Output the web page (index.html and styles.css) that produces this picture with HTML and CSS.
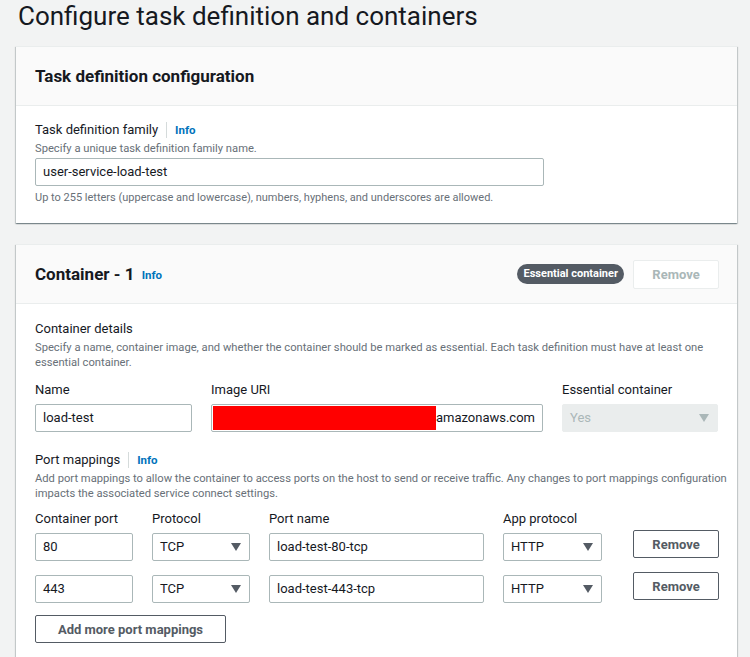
FILE: index.html
```html
<!DOCTYPE html>
<html>
<head>
<meta charset="utf-8">
<link rel="stylesheet" href="styles.css">
</head>
<body>
<h1 class="page-title">Configure task definition and containers</h1>

<section class="card card-first">
  <div class="card-header">
    <h2 class="card-title">Task definition configuration</h2>
  </div>
  <div class="card-body">
    <div class="label-row"><span class="label">Task definition family</span><span class="info-sep"></span><a class="info">Info</a></div>
    <div class="desc">Specify a unique task definition family name.</div>
    <div class="input input-family">user-service-load-test</div>
    <div class="hint">Up to 255 letters (uppercase and lowercase), numbers, hyphens, and underscores are allowed.</div>
  </div>
</section>

<section class="card card-second">
  <div class="card-header header-split">
    <h2 class="card-title">Container - 1 <a class="info info-title">Info</a></h2>
    <div class="header-actions">
      <span class="badge">Essential container</span>
      <button class="btn btn-disabled">Remove</button>
    </div>
  </div>
  <div class="card-body body-second">
    <div class="label">Container details</div>
    <div class="desc desc-wide">Specify a name, container image, and whether the container should be marked as essential. Each task definition must have at least one<br>essential container.</div>

    <div class="details-grid">
      <div class="field">
        <div class="label">Name</div>
        <div class="input">load-test</div>
      </div>
      <div class="field">
        <div class="label">Image URI</div>
        <div class="input input-uri"><span class="redact"></span><span>amazonaws.com</span></div>
      </div>
      <div class="field">
        <div class="label">Essential container</div>
        <div class="input select select-disabled"><span>Yes</span><span class="caret"></span></div>
      </div>
    </div>

    <div class="label-row label-ports"><span class="label">Port mappings</span><span class="info-sep"></span><a class="info">Info</a></div>
    <div class="desc desc-wide">Add port mappings to allow the container to access ports on the host to send or receive traffic. Any changes to port mappings configuration<br>impacts the associated service connect settings.</div>

    <div class="ports-grid">
      <div class="label col-label">Container port</div>
      <div class="label col-label">Protocol</div>
      <div class="label col-label">Port name</div>
      <div class="label col-label">App protocol</div>
      <div></div>

      <div class="input">80</div>
      <div class="input select"><span>TCP</span><span class="caret"></span></div>
      <div class="input">load-test-80-tcp</div>
      <div class="input select"><span>HTTP</span><span class="caret"></span></div>
      <button class="btn btn-remove">Remove</button>

      <div class="input">443</div>
      <div class="input select"><span>TCP</span><span class="caret"></span></div>
      <div class="input">load-test-443-tcp</div>
      <div class="input select"><span>HTTP</span><span class="caret"></span></div>
      <button class="btn btn-remove">Remove</button>
    </div>

    <button class="btn btn-add">Add more port mappings</button>
  </div>
</section>
</body>
</html>
```

FILE: styles.css
```css
* { box-sizing: border-box; }
html, body { margin: 0; padding: 0; }
body {
  background: #f2f3f3;
  font-family: Roboto, "Liberation Sans", sans-serif;
  color: #16191f;
  font-size: 13px;
  width: 750px;
  height: 657px;
  overflow: hidden;
  padding-left: 16px;
}
.page-title {
  margin: 0;
  padding: 1px 0 0 2px;
  font-size: 26px;
  font-weight: 400;
  line-height: 30px;
  height: 46px;
  color: #16191f;
}
.card {
  width: 721px;
  background: #fff;
  box-shadow: 0 1px 1px 0 rgba(0, 28, 36, 0.3), 1px 1px 1px 0 rgba(0, 28, 36, 0.15), -1px 1px 1px 0 rgba(0, 28, 36, 0.15);
  border-top: 1px solid #eaeded;
}
.card-second { margin-top: 21px; }
.card-header {
  background: #fafafa;
  border-bottom: 1px solid #eaeded;
  height: 59px;
  padding: 0 19px;
  display: flex;
  align-items: center;
}
.header-split { justify-content: space-between; padding-right: 18px; }
.card-title {
  margin: 0;
  font-size: 17px;
  font-weight: 700;
  line-height: 22px;
}
.info-title { font-size: 12px; margin-left: 3px; vertical-align: 1px; }
.header-actions { display: flex; align-items: center; gap: 9px; }
.badge {
  background: #545b64;
  color: #fff;
  font-size: 11px;
  font-weight: 700;
  height: 20px;
  line-height: 20px;
  padding: 0 6px;
  border-radius: 10px;
}
.card-body { padding: 15px 19px 0 19px; height: 117px; }
.body-second { padding-top: 16px; height: auto; padding-bottom: 20px; }
.label-row { display: flex; align-items: center; height: 18px; }
.label { font-size: 13px; line-height: 18px; color: #16191f; }
.info-sep {
  width: 1px;
  height: 16px;
  background: #d5dbdb;
  margin: 0 8px 0 8px;
}
.info {
  color: #0073bb;
  font-weight: 700;
  font-size: 11.5px;
}
.desc {
  font-size: 11.2px;
  line-height: 15px;
  color: #687078;
  margin-top: 2px;
}
.desc-wide { white-space: nowrap; }
.hint {
  font-size: 11px;
  line-height: 15px;
  color: #687078;
  margin-top: 4px;
}
.input {
  height: 28px;
  border: 1px solid #aab7b8;
  border-radius: 2px;
  background: #fff;
  font-size: 13px;
  line-height: 26px;
  padding: 0 7px;
  color: #16191f;
  white-space: nowrap;
  overflow: hidden;
}
.input-family { width: 509px; margin-top: 2px; }
.details-grid {
  display: grid;
  grid-template-columns: 157px 332px 156px;
  column-gap: 19px;
  margin-top: 11px;
}
.field .label { margin-bottom: 5px; }
.input-uri { display: flex; align-items: center; padding: 0 7px 0 1px; }
.redact { display: block; flex: 1; height: 24px; background: #ff0000; }
.select { display: flex; justify-content: space-between; align-items: center; }
.caret {
  width: 0; height: 0;
  border-left: 5px solid transparent;
  border-right: 5px solid transparent;
  border-top: 8px solid #545b64;
  margin-right: 1px;
}
.select-disabled { background: #eaeded; border-color: #eaeded; color: #aab7b8; }
.select-disabled .caret { border-top-color: #aab7b8; }
.label-ports { margin-top: 19px; }
.ports-grid {
  display: grid;
  grid-template-columns: 98px 98px 215px 99px 1fr;
  column-gap: 19px;
  row-gap: 14px;
  margin-top: 9px;
  margin-right: -1px;
  align-items: center;
}
.col-label { margin-bottom: -9px; }
.btn {
  font-family: inherit;
  font-weight: 700;
  font-size: 13px;
  background: #fff;
  border: 1px solid #545b64;
  color: #545b64;
  border-radius: 2px;
  height: 28px;
  padding: 0;
  cursor: pointer;
}
.btn-disabled { border-color: #eaeded; color: #aab7b8; width: 86px; height: 29px; }
.btn-remove { width: 86px; justify-self: end; align-self: start; margin-top: -3px; }
.btn-add { width: 191px; margin-top: 12px; }
```
